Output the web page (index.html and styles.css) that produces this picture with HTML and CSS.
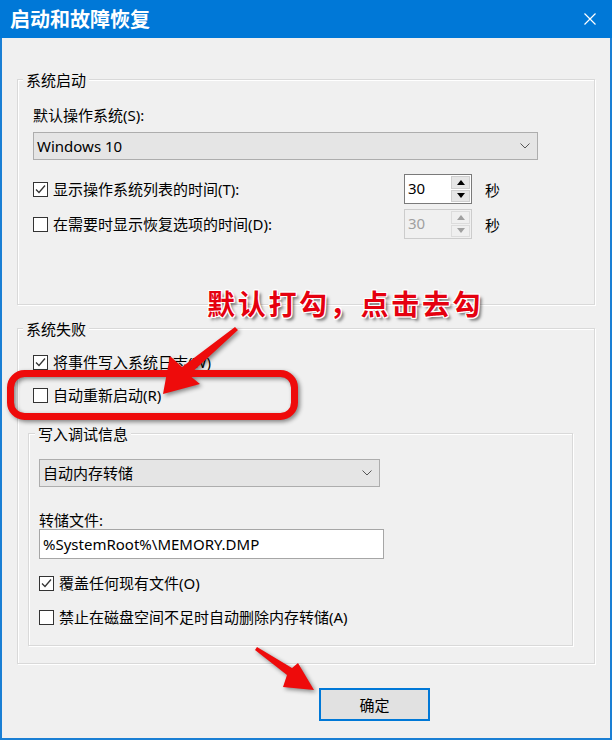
FILE: index.html
```html
<!DOCTYPE html>
<html lang="zh-CN">
<head>
<meta charset="utf-8">
<title>启动和故障恢复</title>
<link rel="stylesheet" href="styles.css">
</head>
<body>
<div class="page">
  <div class="window">
    <div class="titlebar">
      <span class="title">启动和故障恢复</span>
      <svg class="close" width="12" height="12" viewBox="0 0 12 12"><path d="M0.5 0.5L11.5 11.5M11.5 0.5L0.5 11.5" stroke="#fff" stroke-width="1.2" fill="none"/></svg>
    </div>
    <div class="content">
      <section class="group g1">
        <div class="legend">系统启动</div>
        <div class="lbl">默认操作系统(S):</div>
        <div class="combo os"><span>Windows 10</span><svg width="10" height="6" viewBox="0 0 10 6"><polyline points="0.5,0.5 5,5 9.5,0.5" fill="none" stroke="#555" stroke-width="1"/></svg></div>
        <div class="row row1">
          <label class="check wide"><span class="box"><svg width="13" height="13" viewBox="0 0 13 13"><polyline points="2,6.5 5,9.5 11,2.5" fill="none" stroke="#333" stroke-width="1.3"/></svg></span>显示操作系统列表的时间(T):</label>
          <div class="spin"><span class="val">30</span><span class="btns"><span class="btn"><svg width="8" height="5" viewBox="0 0 8 5"><polygon points="4,0 8,5 0,5" fill="#000"/></svg></span><span class="btn"><svg width="8" height="5" viewBox="0 0 8 5"><polygon points="0,0 8,0 4,5" fill="#000"/></svg></span></span></div>
          <span class="sec">秒</span>
        </div>
        <div class="row row2">
          <label class="check wide"><span class="box"></span>在需要时显示恢复选项的时间(D):</label>
          <div class="spin disabled"><span class="val">30</span><span class="btns"><span class="btn"><svg width="8" height="5" viewBox="0 0 8 5"><polygon points="4,0 8,5 0,5" fill="#a0a0a0"/></svg></span><span class="btn"><svg width="8" height="5" viewBox="0 0 8 5"><polygon points="0,0 8,0 4,5" fill="#a0a0a0"/></svg></span></span></div>
          <span class="sec">秒</span>
        </div>
      </section>

      <section class="group g2">
        <div class="legend">系统失败</div>
        <label class="check item first"><span class="box"><svg width="13" height="13" viewBox="0 0 13 13"><polyline points="2,6.5 5,9.5 11,2.5" fill="none" stroke="#333" stroke-width="1.3"/></svg></span>将事件写入系统日志(W)</label>
        <label class="check item"><span class="box"></span>自动重新启动(R)</label>

        <section class="group sub">
          <div class="legend sublegend">写入调试信息</div>
          <div class="combo dump"><span>自动内存转储</span><svg width="10" height="6" viewBox="0 0 10 6"><polyline points="0.5,0.5 5,5 9.5,0.5" fill="none" stroke="#555" stroke-width="1"/></svg></div>
          <div class="lbl file">转储文件:</div>
          <div class="input">%SystemRoot%\MEMORY.DMP</div>
          <label class="check item sub1"><span class="box"><svg width="13" height="13" viewBox="0 0 13 13"><polyline points="2,6.5 5,9.5 11,2.5" fill="none" stroke="#333" stroke-width="1.3"/></svg></span>覆盖任何现有文件(O)</label>
          <label class="check item sub2"><span class="box"></span>禁止在磁盘空间不足时自动删除内存转储(A)</label>
        </section>
      </section>

      <div class="footer">
        <button class="ok">确定</button>
      </div>
    </div>
  </div>

  <svg class="marks" width="612" height="740" viewBox="0 0 612 740">
    <g class="redmark">
      <rect x="10.5" y="373.5" width="284" height="43" rx="14" ry="14" fill="none" stroke="#ee0b0b" stroke-width="7"/>
      <polygon points="235,327 182,367 170,356 163,394 200,384 189,375 238,330" fill="#ee0b0b"/>
      <polygon points="257,647 292,668 298,663 314,690 283,687 287,675 255,650" fill="#ee0b0b"/>
    </g>
  </svg>
  <div class="note">默认打勾，点击去勾</div>
</div>
</body>
</html>
```

FILE: styles.css
```css
* { box-sizing: border-box; }

body {
  margin: 0;
  font-family: "Noto Sans", "Noto Sans CJK SC", sans-serif;
  font-size: 15px;
  color: #000;
  background: #f0f0f0;
}

.page {
  position: relative;
  width: 612px;
  height: 740px;
}

.window {
  width: 612px;
  height: 740px;
  background: #f0f0f0;
  border: 2px solid #1a7fd4;
  border-top: 0;
  display: flex;
  flex-direction: column;
}

.titlebar {
  height: 38px;
  margin: 0 -2px;
  background: #0078d7;
  color: #fff;
  display: flex;
  align-items: center;
  justify-content: space-between;
  padding: 0 16px 0 10px;
  flex: none;
}

.title {
  font-family: "Noto Sans CJK SC", sans-serif;
  font-weight: 700;
  font-size: 20px;
  line-height: 24px;
}

.close { display: block; }

.content {
  flex: 1;
  display: flex;
  flex-direction: column;
  padding: 0 15px;
}

.group {
  border: 1px solid #d9d9d9;
  box-shadow: inset 1px 1px 0 #fff, 1px 1px 0 #fff;
  display: flex;
  flex-direction: column;
  align-items: flex-start;
}

.legend {
  height: 20px;
  line-height: 20px;
  margin: -10px 0 0 -10px;
  padding: 0 3px;
  background: #f0f0f0;
  white-space: nowrap;
}

.g1 {
  margin-top: 41px;
  padding: 0 15px 65px;
}

.lbl {
  line-height: 20px;
  margin-top: 15px;
}

.combo {
  height: 28px;
  border: 1px solid #adadad;
  background: #e5e5e5;
  display: flex;
  align-items: center;
  justify-content: space-between;
  padding: 0 7px 0 3px;
  line-height: 20px;
}

.combo svg { display: block; }

.combo.os {
  width: 505px;
  margin-top: 7px;
}

.row {
  display: flex;
  align-items: center;
  height: 30px;
}

.row1 { margin-top: 14px; }
.row2 { margin-top: 5px; }

.check {
  display: flex;
  align-items: center;
  gap: 5px;
  line-height: 20px;
  white-space: nowrap;
}

.check.wide { width: 371px; }

.box {
  width: 15px;
  height: 15px;
  border: 1px solid #333;
  background: #fff;
  flex: none;
  display: flex;
  align-items: center;
  justify-content: center;
}

.box svg { display: block; }

.spin {
  width: 68px;
  height: 30px;
  border: 1px solid #7a7a7a;
  background: #fff;
  display: flex;
  flex: none;
}

.spin .val {
  flex: 1;
  padding-left: 3px;
  line-height: 27px;
}

.spin .btns {
  width: 20px;
  display: flex;
  flex-direction: column;
  padding: 1px 1px 1px 0;
  gap: 1px;
}

.spin .btn {
  flex: 1;
  background: #e6e6e6;
  border: 1px solid #cfcfcf;
  display: flex;
  align-items: center;
  justify-content: center;
}

.spin .btn svg { display: block; }

.spin.disabled {
  border-color: #cccccc;
  background: #f0f0f0;
  color: #a0a0a0;
}

.spin.disabled .btn {
  background: #efefef;
  border-color: #dcdcdc;
}

.sec { margin-left: 13px; }

.g2 {
  margin-top: 23px;
  padding: 0 15px;
}

.item { margin-top: 13px; }
.item.first { margin-top: 13px; }

.sub {
  align-self: stretch;
  margin: 28px 6px 17px -5px;
  padding: 0 10px 18px;
}

.sublegend { margin-left: -4px; }

.combo.dump {
  width: 341px;
  margin-top: 15px;
}

.lbl.file {
  margin-top: 24px;
  line-height: 18px;
}

.input {
  width: 345px;
  height: 30px;
  border: 1px solid #a6a6a6;
  background: #fff;
  padding-left: 3px;
  line-height: 28px;
  white-space: nowrap;
}

.item.sub1 { margin-top: 14px; }
.item.sub2 { margin-top: 14px; }

.footer {
  margin-top: 24px;
  display: flex;
}

.ok {
  margin-left: 302px;
  width: 111px;
  height: 33px;
  border: 2px solid #0078d7;
  background: #e1e1e1;
  font-family: "Noto Sans CJK SC", sans-serif;
  font-size: 15px;
  color: #000;
  padding: 0;
}

.marks {
  position: absolute;
  left: 0;
  top: 0;
  pointer-events: none;
}

.redmark {
  filter: drop-shadow(2px 2px 2px rgba(0, 0, 0, 0.45));
}

.note {
  position: absolute;
  left: 207px;
  top: 285px;
  font-family: "Noto Sans CJK SC", sans-serif;
  font-weight: 700;
  font-size: 28px;
  line-height: 36px;
  letter-spacing: 2.7px;
  color: #e5000f;
  white-space: nowrap;
  text-shadow:
    1px 0 0 #fff, -1px 0 0 #fff, 0 1px 0 #fff, 0 -1px 0 #fff,
    1px 1px 0 #fff, -1px -1px 0 #fff, 1px -1px 0 #fff, -1px 1px 0 #fff,
    3px 3px 3px rgba(0, 0, 0, 0.5);
}
```
